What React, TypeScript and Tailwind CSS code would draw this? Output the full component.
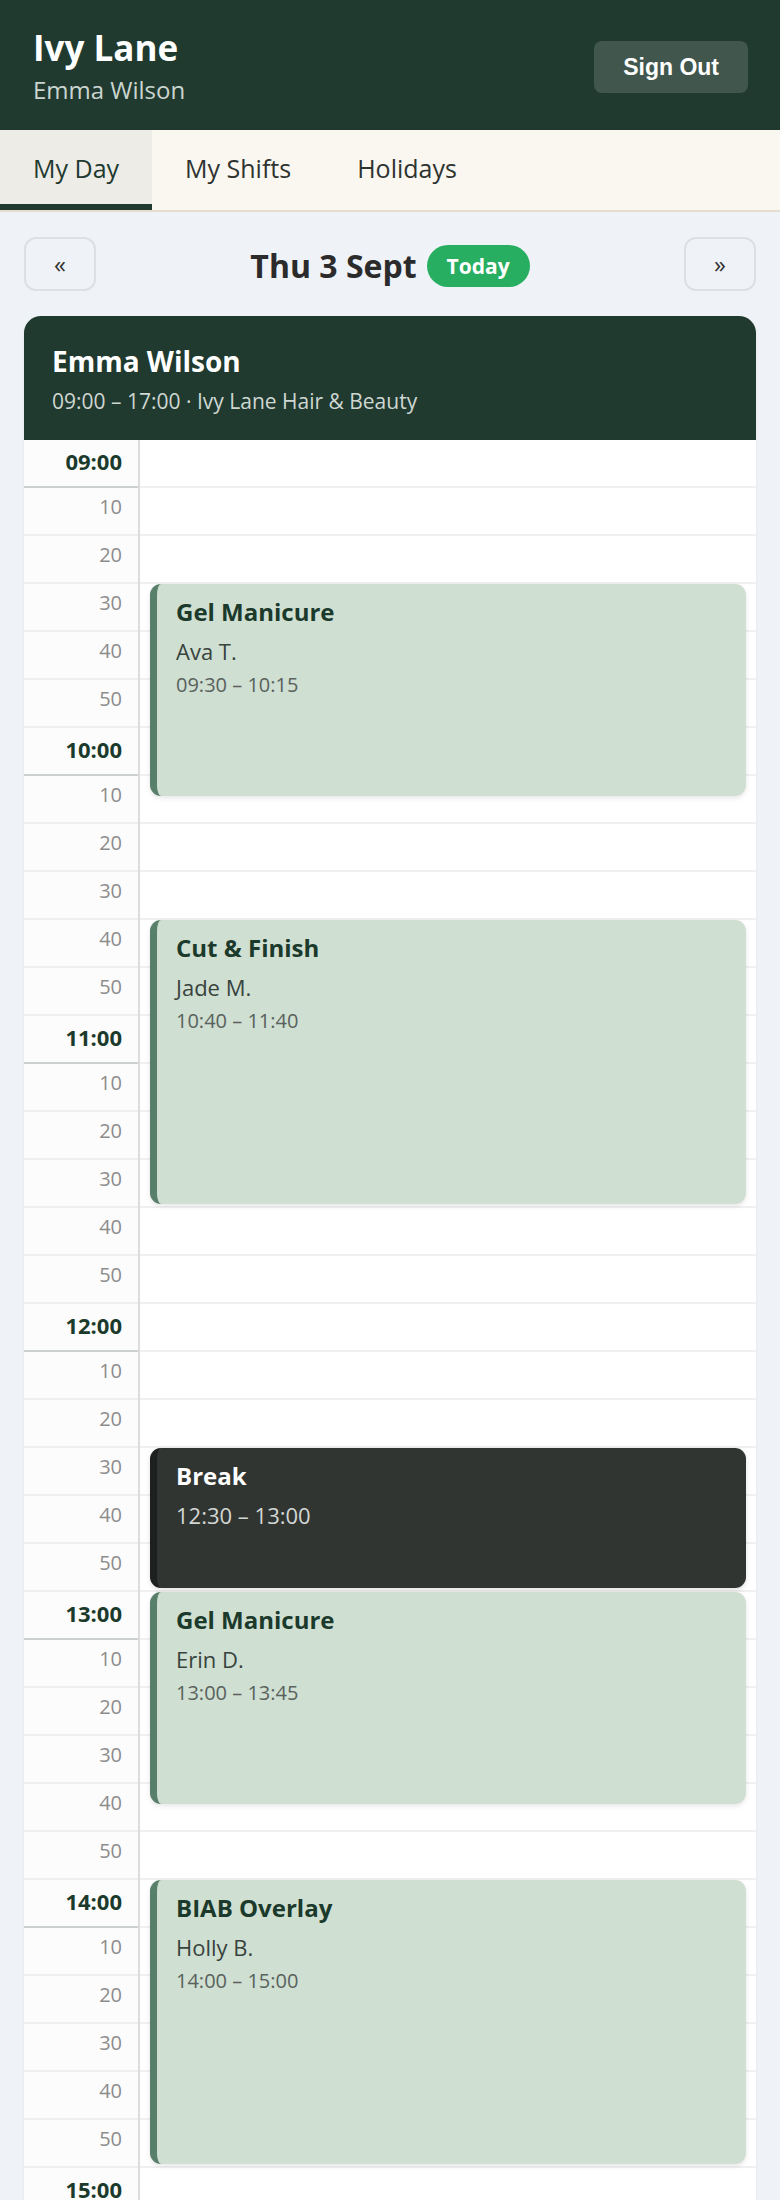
import { useMemo } from "react";

type Booking = {
  id: string;
  title: string;
  client?: string;
  start: string;
  end: string;
  kind: "service" | "break";
};

const DAY_START = 9 * 60;
const DAY_END = 17 * 60;
const SLOT_MIN = 10;
const SLOT_H = 48;

const bookings: Booking[] = [
  { id: "b1", title: "Gel Manicure", client: "Ava T.", start: "09:30", end: "10:15", kind: "service" },
  { id: "b2", title: "Cut & Finish", client: "Jade M.", start: "10:40", end: "11:40", kind: "service" },
  { id: "b3", title: "Break", start: "12:30", end: "13:00", kind: "break" },
  { id: "b4", title: "Gel Manicure", client: "Erin D.", start: "13:00", end: "13:45", kind: "service" },
  { id: "b5", title: "BIAB Overlay", client: "Holly B.", start: "14:00", end: "15:00", kind: "service" },
];

const tabs = ["My Day", "My Shifts", "Holidays"];

const toMinutes = (t: string) => {
  const [h, m] = t.split(":").map(Number);
  return h * 60 + m;
};

const pad = (n: number) => String(n).padStart(2, "0");

function BookingBlock({ booking }: { booking: Booking }) {
  const start = toMinutes(booking.start);
  const end = toMinutes(booking.end);
  const top = ((start - DAY_START) / SLOT_MIN) * SLOT_H;
  const height = ((end - start) / SLOT_MIN) * SLOT_H - 4;
  const isBreak = booking.kind === "break";

  return (
    <div
      className={
        isBreak
          ? "absolute left-[10px] right-[10px] overflow-hidden rounded-[11px] border-l-[7px] border-[#1d201e] bg-[#313532] pl-[19px] pt-[13px] shadow-[0_2px_5px_rgba(0,0,0,0.12)]"
          : "absolute left-[10px] right-[10px] overflow-hidden rounded-[11px] border-l-[7px] border-[#587f69] bg-[#cfdfd2] pl-[19px] pt-[13px] shadow-[0_2px_5px_rgba(0,0,0,0.1)]"
      }
      style={{ top, height }}
    >
      <p className={isBreak ? "text-[24px] font-bold leading-[30px] text-white" : "text-[24px] font-bold leading-[30px] text-[#1b3a2b]"}>
        {booking.title}
      </p>
      {isBreak ? (
        <p className="mt-[8px] text-[22px] leading-[33px] text-[#d3d7d4]">
          {booking.start} – {booking.end}
        </p>
      ) : (
        <>
          <p className="mt-[8px] text-[22px] leading-[33px] text-[#38433d]">{booking.client}</p>
          <p className="mt-[2px] text-[20px] leading-[30px] text-[#59625d]">
            {booking.start} – {booking.end}
          </p>
        </>
      )}
    </div>
  );
}

export default function App() {
  const slots = useMemo(() => {
    const list: { key: number; label: string; isHour: boolean }[] = [];
    for (let m = DAY_START; m <= DAY_END; m += SLOT_MIN) {
      const isHour = m % 60 === 0;
      list.push({
        key: m,
        label: isHour ? `${pad(Math.floor(m / 60))}:00` : String(m % 60),
        isHour,
      });
    }
    return list;
  }, []);

  return (
    <div className="min-h-screen bg-[#eff2f6] font-['Segoe_UI','Open_Sans',sans-serif] text-[#2b2b2b]">
      <header className="flex items-center justify-between bg-[#203a30] pb-[23px] pl-[33px] pr-[32px] pt-[27px]">
        <div>
          <h1 className="text-[35px] font-bold leading-[42px] text-white">Ivy Lane</h1>
          <p className="mt-[4px] text-[24px] leading-[34px] text-[#cbd5cf]">Emma Wilson</p>
        </div>
        <button className="h-[52px] rounded-[8px] bg-white/15 px-[29px] font-['Liberation_Sans',Arial,sans-serif] text-[23px] font-bold text-white">
          Sign Out
        </button>
      </header>

      <nav className="flex border-b-2 border-[#e6ddd1] bg-[#faf7f1]">
        {tabs.map((tab, i) => (
          <button
            key={tab}
            className={
              i === 0
                ? "border-b-[6px] border-[#203a30] bg-[#edece7] px-[33px] pb-[17px] pt-[20px] text-[25px] font-medium leading-[37px] text-[#1f3a2f]"
                : "border-b-[6px] border-transparent px-[33px] pb-[17px] pt-[20px] text-[25px] font-medium leading-[37px] text-[#2e3330]"
            }
          >
            {tab}
          </button>
        ))}
      </nav>

      <main className="px-6 pt-[25px]">
        <div className="flex items-center justify-between">
          <button className="flex h-[54px] w-[72px] items-center justify-center rounded-[12px] border-2 border-[#dcdfe3] text-[24px] text-[#333]">
            «
          </button>
          <div className="flex items-center gap-[10px] pt-[4px]">
            <h2 className="text-[32px] font-bold leading-[38px] text-[#2b2b2b]">Thu 3 Sept</h2>
            <span className="rounded-full bg-[#27ae60] px-[20px] py-[7px] text-[21px] font-bold leading-[28px] text-white">
              Today
            </span>
          </div>
          <button className="flex h-[54px] w-[72px] items-center justify-center rounded-[12px] border-2 border-[#dcdfe3] text-[24px] text-[#333]">
            »
          </button>
        </div>

        <section className="mt-[25px] overflow-hidden rounded-[17px] bg-white shadow-[0_1px_3px_rgba(0,0,0,0.06)]">
          <div className="bg-[#203a30] px-[28px] pb-[23px] pt-[28px]">
            <h3 className="text-[28px] font-bold leading-[34px] text-white">Emma Wilson</h3>
            <p className="mt-[8px] text-[21px] leading-[31px] text-[#cfd7d2]">
              09:00 – 17:00 · Ivy Lane Hair &amp; Beauty
            </p>
          </div>

          <div className="flex">
            <div className="w-[116px] shrink-0 border-r-2 border-[#dcdcdc] bg-[#fcfcfc]">
              {slots.map((slot) => (
                <div
                  key={slot.key}
                  className={
                    slot.isHour
                      ? "flex h-[48px] justify-end border-b-2 border-[#cdd1d1] pr-[16px] pt-[10px] text-[22px] font-bold leading-none text-[#1b3a2b]"
                      : "flex h-[48px] justify-end border-b-2 border-[#eeeeee] pr-[16px] pt-[9px] text-[20px] leading-none text-[#8c8c8c]"
                  }
                >
                  {slot.label}
                </div>
              ))}
            </div>

            <div className="relative flex-1">
              {slots.map((slot) => (
                <div key={slot.key} className="h-[48px] border-b-2 border-[#f0f0f0]" />
              ))}
              {bookings.map((b) => (
                <BookingBlock key={b.id} booking={b} />
              ))}
            </div>
          </div>
        </section>
      </main>
    </div>
  );
}
